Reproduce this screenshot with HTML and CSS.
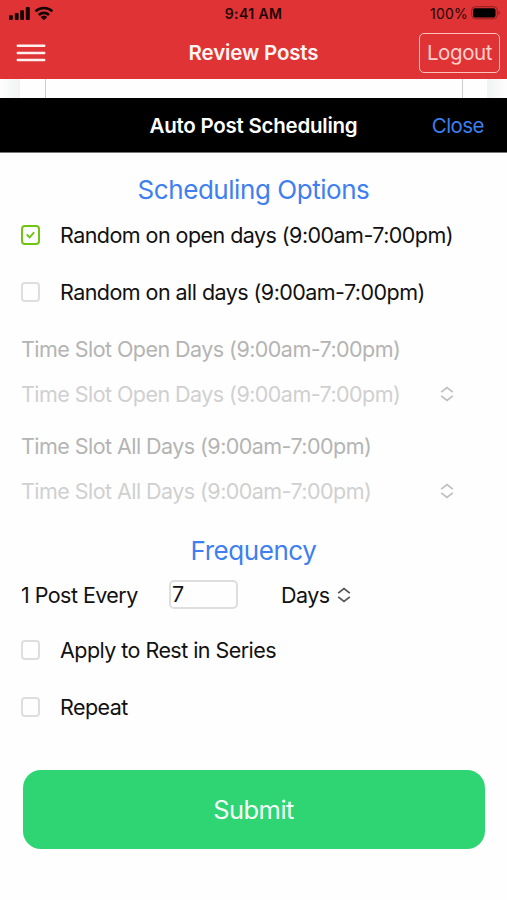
FILE: index.html
```html
<!DOCTYPE html>
<html lang="en">
<head>
<meta charset="utf-8">
<title>Auto Post Scheduling</title>
<link rel="stylesheet" href="styles.css">
</head>
<body>
<header class="top">
  <div class="status">
    <svg class="signal" width="48" height="18" viewBox="0 0 48 18">
      <g fill="#160505"><rect x="1" y="11.2" width="3.8" height="4.8" rx="1"/><rect x="6.8" y="9" width="3.8" height="7" rx="1"/><rect x="12.2" y="6.2" width="3.8" height="9.8" rx="1"/><rect x="17.8" y="3" width="4" height="13" rx="1"/></g>
      <g fill="none" stroke="#160505" stroke-width="2.7"><path d="M27.5 7.4a12.1 12.1 0 0 1 16.8 0"/><path d="M30.8 11a7.3 7.3 0 0 1 10.2 0"/></g>
      <path d="M32.5 13a5 5 0 0 1 6.8 0L35.9 16.2z" fill="#160505"/>
    </svg>
    <span class="time">9:41 AM</span>
    <span class="power"><span class="percent">100%</span>
      <svg width="30" height="14" viewBox="0 0 30 14"><rect x=".7" y=".7" width="25.6" height="12.1" rx="3.6" fill="none" stroke="#8d2224"/><rect x="2" y="2.2" width="22.5" height="9.2" rx="2" fill="#000"/><path d="M27.5 4.6q3 2.2 0 4.4z" fill="#8d2224"/></svg>
    </span>
  </div>
  <nav class="nav">
    <svg class="menu" width="30" height="20" viewBox="0 0 30 20"><path d="M1.8 2.7h26.4M1.8 9.9h26.4M1.8 17.1h26.4" stroke="#fff1ef" stroke-width="2.5" stroke-linecap="round"/></svg>
    <h1 class="nav-title">Review Posts</h1>
    <button class="logout"><span>Logout</span></button>
  </nav>
</header>
<div class="backdrop"><div class="card"></div></div>
<div class="sheet-bar">
  <h2 class="sheet-title">Auto Post Scheduling</h2>
  <a class="close">Close</a>
</div>
<main>
  <h3 class="heading options">Scheduling Options</h3>
  <label class="row check-row"><span class="box checked"><svg width="9" height="8" viewBox="0 0 9 8"><path d="M1.3 4 3.6 6.3 7.6 1.8" fill="none" stroke="#72c414" stroke-width="1.9" stroke-linecap="round"/></svg></span><span>Random on open days (9:00am-7:00pm)</span></label>
  <label class="row check-row"><span class="box"></span><span>Random on all days (9:00am-7:00pm)</span></label>
  <div class="row slot-label"><span>Time Slot Open Days (9:00am-7:00pm)</span></div>
  <div class="row slot-pick"><span>Time Slot Open Days (9:00am-7:00pm)</span>
    <svg class="chev" width="14" height="16" viewBox="0 0 14 16"><path d="M1.2 6.1 7 1.6l5.8 4.5M1.2 9.9 7 14.4l5.8-4.5"/></svg></div>
  <div class="row slot-label second"><span>Time Slot All Days (9:00am-7:00pm)</span></div>
  <div class="row slot-pick"><span>Time Slot All Days (9:00am-7:00pm)</span>
    <svg class="chev" width="14" height="16" viewBox="0 0 14 16"><path d="M1.2 6.1 7 1.6l5.8 4.5M1.2 9.9 7 14.4l5.8-4.5"/></svg></div>
  <h3 class="heading frequency">Frequency</h3>
  <div class="row every"><span class="every-label">1 Post Every</span><span class="count">7</span><span class="unit">Days</span>
    <svg class="chev dark" width="14" height="16" viewBox="0 0 14 16"><path d="M1.2 6.1 7 1.6l5.8 4.5M1.2 9.9 7 14.4l5.8-4.5"/></svg></div>
  <label class="row check-row"><span class="box"></span><span>Apply to Rest in Series</span></label>
  <label class="row check-row"><span class="box"></span><span>Repeat</span></label>
  <button class="submit"><span>Submit</span></button>
</main>
</body>
</html>
```
FILE: styles.css
```css
* { box-sizing: border-box; }
body { margin: 0; background: #fefefe; color: #111; font-family: Inter, "Liberation Sans", sans-serif; font-size: 21.5px; letter-spacing: -.55px; line-height: 28px; white-space: nowrap; overflow: hidden; }
h1, h2, h3 { margin: 0; font-weight: 400; }
button { font: inherit; letter-spacing: inherit; padding: 0; }
svg { display: block; flex: none; }
.top { height: 79px; background: #df3335; }
.status { height: 28px; display: grid; grid-template-columns: 1fr auto 1fr; align-items: center; padding: 0 8px; color: #230708; }
.signal { margin-top: -2px; }
.time { font-size: 14px; font-weight: 600; letter-spacing: .4px; }
.power { display: flex; justify-content: flex-end; align-items: center; gap: 3px; margin-right: -2px; }
.percent { font-size: 14px; letter-spacing: .2px; }
.power svg { margin-top: -2px; }
.nav { height: 50px; display: grid; grid-template-columns: 1fr auto 1fr; align-items: center; padding: 0 7px; color: #fff5f3; }
.menu { margin-left: 9px; }
.nav-title { font-size: 20.5px; font-weight: 600; letter-spacing: -.15px; }
.logout { justify-self: end; width: 81px; height: 40px; margin-top: -1px; border: 1.5px solid #ffc0bd; border-radius: 5px; background: none; color: #ffd0cc; font-size: 20.5px; letter-spacing: -.4px; }
.backdrop { height: 19px; padding: 0 44px 0 45px; background: linear-gradient(90deg, #fefefe 0, #f1f2f3 20px, #fefefe 20px, #fefefe 487px, #f1f2f3 487px, #fefefe 507px); }
.card { height: 19px; border: solid #ccc; border-width: 0 1px; background: #fefefe; }
.sheet-bar { height: 55px; background: #000; border-bottom: 1px solid #777; display: grid; grid-template-columns: 1fr auto 1fr; align-items: center; padding: 2px 23px 0; }
.sheet-title { grid-column: 2; color: #fff; font-size: 20.5px; font-weight: 600; letter-spacing: -.25px; }
.close { justify-self: end; color: #3c7ff0; font-size: 20.5px; }
main { padding: 20px 21px 0; }
.heading { color: #407ff0; font-size: 26px; line-height: 34px; letter-spacing: -.45px; text-align: center; }
.row { display: flex; align-items: center; height: 57px; }
.options { margin-bottom: -1px; }
.check-row { gap: 20px; }
.box { width: 19px; height: 20px; border: 2px solid #dedede; border-radius: 4px; display: flex; align-items: center; justify-content: center; flex: none; }
.checked { border-color: #72c414; }
.slot-label { color: #b4b4b4; }
.slot-pick { color: #d0d0d0; height: 34px; justify-content: space-between; padding-right: 32px; }
.second { margin-top: 6px; }
.chev { fill: none; stroke: #bfbfbf; stroke-width: 1.8; }
.dark { stroke: #555; }
.frequency { margin-top: 26px; }
.every { height: 53px; }
.every-label { width: 148px; }
.count { width: 69px; height: 29px; border: 2px solid #dedede; border-radius: 5px; padding-left: 1px; line-height: 25px; margin-right: 43px; }
.unit { width: 56px; }
.submit { display: block; margin: 35px auto 0; width: 462px; height: 79px; border: 0; border-radius: 18px; background: #2fd473; color: #f4fff7; font-size: 25.5px; }
```
